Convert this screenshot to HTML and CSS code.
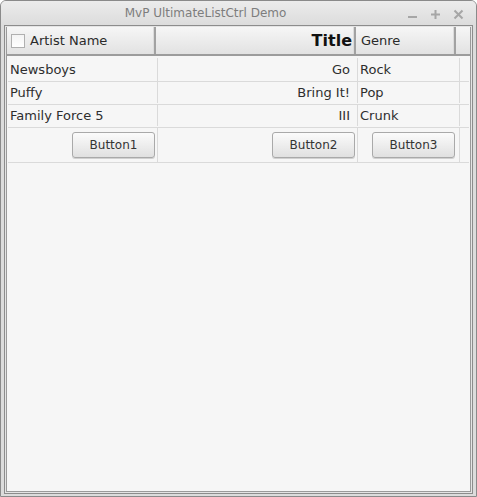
FILE: index.html
```html
<!DOCTYPE html>
<html>
<head>
<meta charset="utf-8">
<link rel="stylesheet" href="styles.css">
</head>
<body>
<div class="window">
  <div class="titlebar">
    <div class="title">MvP UltimateListCtrl Demo</div>
    <div class="controls">
      <svg width="11" height="11" viewBox="0 0 11 11"><rect x="1" y="7" width="9" height="2" fill="#a6a6a6"/></svg>
      <svg width="11" height="11" viewBox="0 0 11 11"><rect x="1" y="4.5" width="9" height="2" fill="#a6a6a6"/><rect x="4.5" y="1" width="2" height="9" fill="#a6a6a6"/></svg>
      <svg width="11" height="11" viewBox="0 0 11 11"><path d="M1.5 1.5 L9.5 9.5 M9.5 1.5 L1.5 9.5" stroke="#a6a6a6" stroke-width="2"/></svg>
    </div>
  </div>
  <div class="client">
    <div class="list">
      <div class="header">
        <div class="hcell h1"><span class="check"></span>Artist Name</div>
        <div class="hcell h2">Title</div>
        <div class="hcell h3">Genre</div>
        <div class="hcell h4"></div>
      </div>
      <div class="body">
        <div class="row">
          <div class="cell c1">Newsboys</div>
          <div class="cell c2 right">Go</div>
          <div class="cell c3">Rock</div>
          <div class="cell c4"></div>
        </div>
        <div class="row">
          <div class="cell c1">Puffy</div>
          <div class="cell c2 right">Bring It!</div>
          <div class="cell c3">Pop</div>
          <div class="cell c4"></div>
        </div>
        <div class="row">
          <div class="cell c1">Family Force 5</div>
          <div class="cell c2 right">III</div>
          <div class="cell c3">Crunk</div>
          <div class="cell c4"></div>
        </div>
        <div class="row brow">
          <div class="cell c1 right"><button class="btn">Button1</button></div>
          <div class="cell c2 right"><button class="btn">Button2</button></div>
          <div class="cell c3 right"><button class="btn">Button3</button></div>
          <div class="cell c4"></div>
        </div>
      </div>
    </div>
  </div>
</div>
</body>
</html>
```

FILE: styles.css
```css
html, body {
  margin: 0;
  padding: 0;
  background: #ffffff;
}
body {
  font-family: "DejaVu Sans", sans-serif;
  font-size: 13px;
  color: #2e2e2e;
}
.window {
  width: 477px;
  height: 497px;
  box-sizing: border-box;
  border: 1px solid #8a8a8a;
  border-radius: 6px 6px 0 0;
  background: #dcdcdc;
  display: flex;
  flex-direction: column;
  overflow: hidden;
}
.titlebar {
  height: 24px;
  flex: none;
  background: linear-gradient(#ececec, #dcdcdc);
  display: flex;
  align-items: center;
  position: relative;
}
.title {
  flex: 1;
  text-align: center;
  padding-right: 66px;
  font-size: 12px;
  color: #7d7d7d;
  line-height: 25px;
}
.controls {
  position: absolute;
  right: 12px;
  top: 8px;
  display: flex;
  gap: 12px;
}
.controls svg { display: block; }
.client {
  flex: 1;
  display: flex;
  padding: 0 3px 2px 3px;
}
.list {
  flex: 1;
  border: 1px solid #8c8c8c;
  box-shadow: inset 0 0 0 1px #e4e4e4, inset 0 0 0 2px #9a9a9a;
  padding: 1px 2px 2px 2px;
  background: #f6f6f6;
  display: flex;
  flex-direction: column;
}
.header {
  display: flex;
  height: 27px;
  border-bottom: 2px solid #9c9c9c;
  background: linear-gradient(#f6f6f6, #e2e2e2);
  flex: none;
}
.hcell {
  display: flex;
  align-items: center;
  box-sizing: border-box;
  border-right: 2px solid #a2a2a2;
  box-shadow: inset -1px 0 0 #dcdcdc;
  padding: 0 3px;
  color: #2a2a2a;
}
.h1 { width: 149px; padding-left: 4px; }
.h2 { width: 200px; justify-content: flex-end; font-weight: bold; font-size: 16px; color: #111; padding-right: 2px; }
.h3 { width: 100px; padding-left: 5px; }
.h4 { flex: 1; border-right: none; box-shadow: none; }
.check {
  width: 12px;
  height: 12px;
  border: 1px solid #b0b0b0;
  background: linear-gradient(#f4f4f4, #ffffff);
  margin-right: 5px;
  margin-top: 1px;
}
.body {
  flex: 1;
  background: #f6f6f6;
  margin-left: 1px;
  margin-right: 1px;
}
.row {
  display: flex;
  height: 23px;
  padding-bottom: 1px;
  border-bottom: 1px solid #dadada;
  box-sizing: border-box;
}
.row:first-child { height: 26px; padding-top: 2px; padding-bottom: 0; }
.brow { height: 35px; padding-bottom: 0; }
.cell {
  display: flex;
  align-items: center;
  box-sizing: border-box;
  border-right: 1px solid #dadada;
  padding: 0 2px;
  white-space: nowrap;
}
.c1 { width: 150px; }
.c2 { width: 200px; padding-right: 7px; }
.c3 { width: 102px; }
.c4 { flex: 1; border-right: none; }
.right { justify-content: flex-end; }
.brow .c1 { padding-right: 2px; }
.brow .c2 { padding-right: 2px; }
.brow .c3 { padding-right: 4px; }
.btn {
  font-family: "DejaVu Sans", sans-serif;
  font-size: 12px;
  color: #333;
  width: 83px;
  height: 26px;
  border: 1px solid #a9a9a9;
  border-radius: 3px;
  background: linear-gradient(#fbfbfb, #e0e0e0);
  box-shadow: 0 1px 0 #d0d0d0;
  padding: 0;
}
```
